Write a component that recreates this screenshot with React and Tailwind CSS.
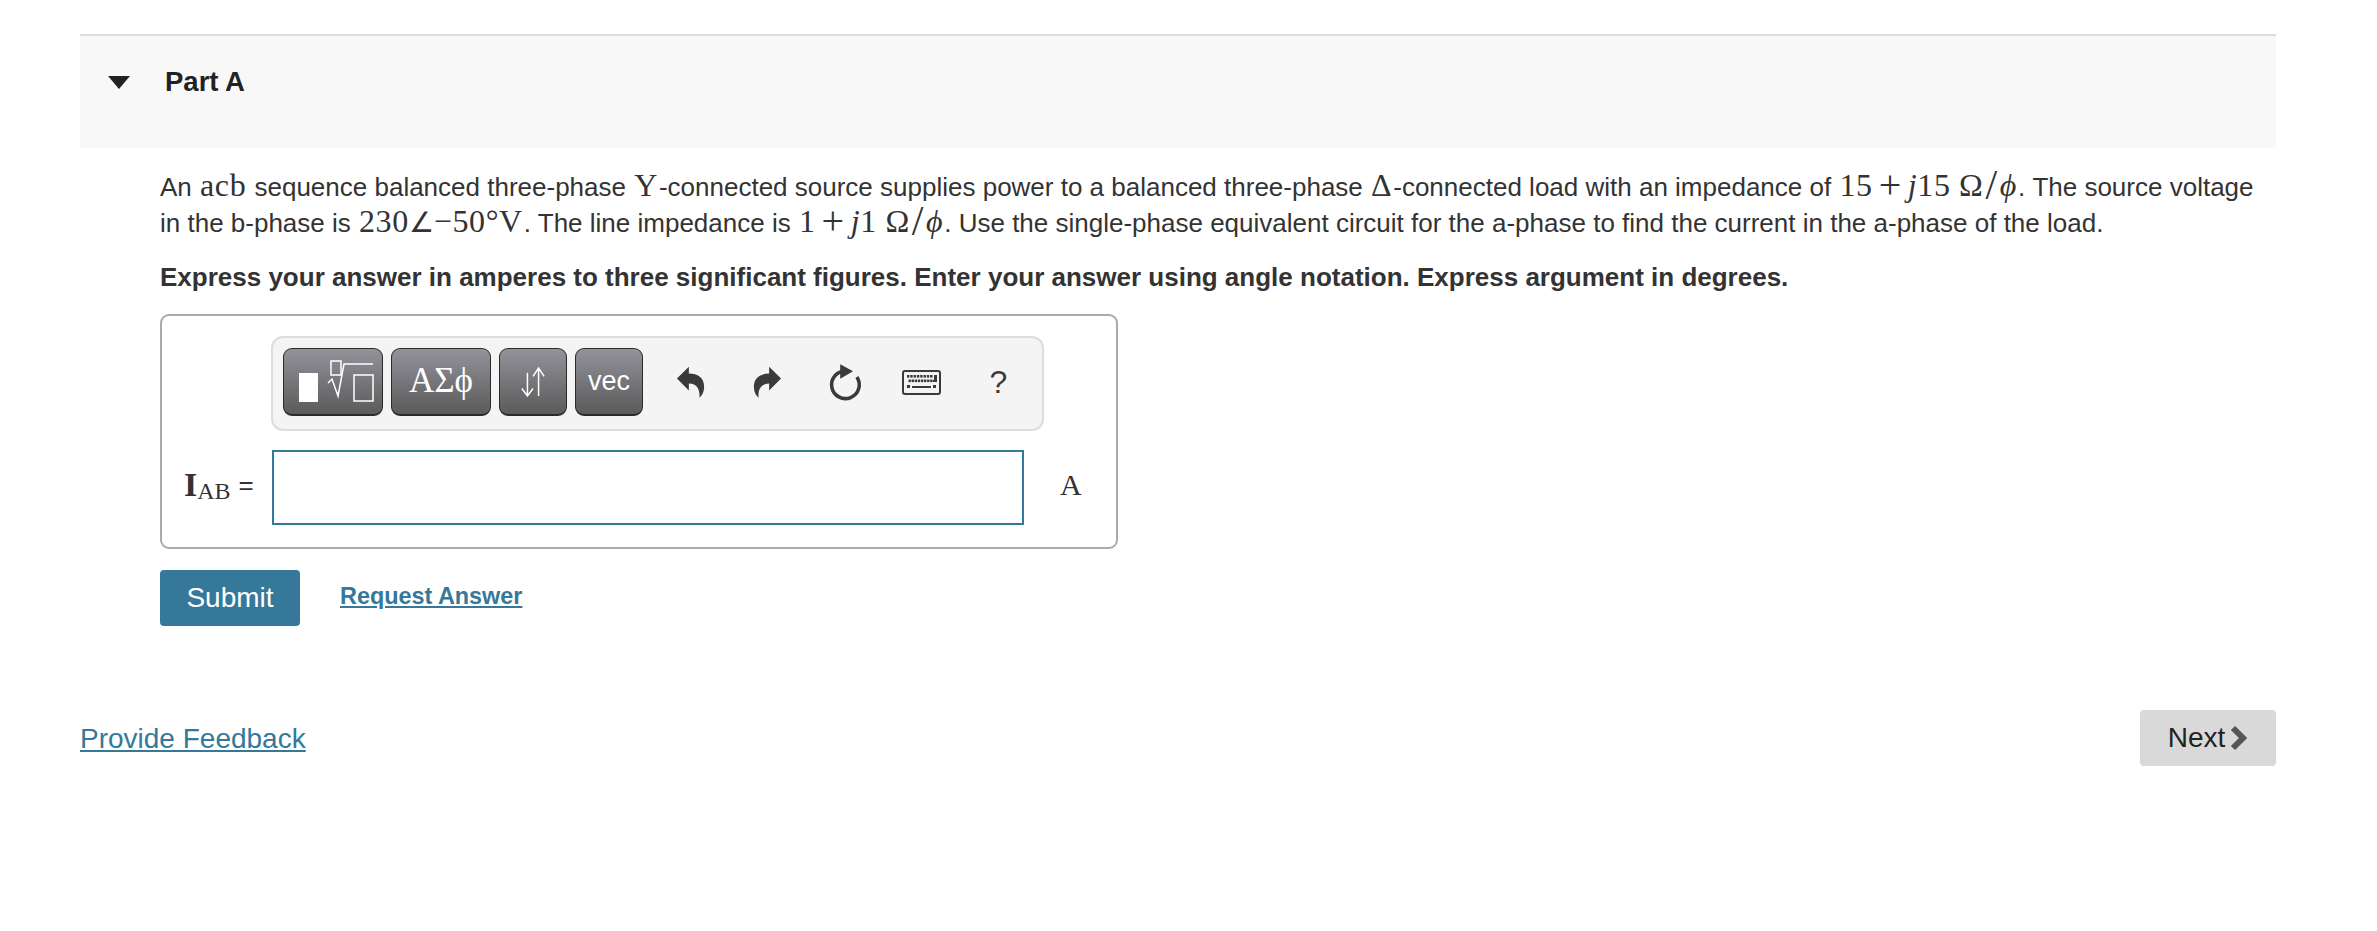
const M = ({ children, className = '' }) => (
  <span className={`font-['Liberation_Serif',serif] text-[32px] tracking-[0.6px] leading-[0] mx-[1px] ${className}`}>{children}</span>
);

const Op = ({ children }) => <span className="text-[40px] leading-[0] mx-[6px] align-[-2px]">{children}</span>;
const Sl = () => <span className="text-[42px] font-light leading-[0] mx-[2px] align-[-3px]">/</span>;

function ToolButton({ className = '', children }) {
  return (
    <div className={`h-[68px] flex items-center justify-center rounded-[9px] border border-[#2b2b2b] border-b-2 bg-gradient-to-b from-[#93939b] to-[#5b5b5b] text-white ${className}`}>
      {children}
    </div>
  );
}

function UndoIcon({ flip }) {
  return (
    <svg width="29" height="33" viewBox="78 122 86 100" className={flip ? '-scale-x-100' : ''}>
      <path
        d="M80 160 L116 124 L116 145 C145 145 165 160 162 190 C161 203 155 212 148 218 C150 200 145 175 116 175 L116 196 Z"
        fill="#3a3a3a"
      />
    </svg>
  );
}

function ReloadIcon() {
  return (
    <svg width="36" height="39" viewBox="527 112 112 120">
      <path d="M585 136 A43 43 0 1 0 620 155" fill="none" stroke="#3a3a3a" strokeWidth="11" />
      <path d="M568 115 L608 137 L568 160 Z" fill="#3a3a3a" />
    </svg>
  );
}

function KeyboardIcon() {
  const top = [0, 1, 2, 3, 4, 5, 6, 7];
  const mid = [0, 1, 2, 3, 4, 5, 6, 7];
  return (
    <svg width="39" height="25" viewBox="0 0 39 25">
      <rect x="1" y="1" width="37" height="23" rx="2" fill="#f4f4f4" stroke="#3a3a3a" strokeWidth="2" />
      {top.map((i) => (
        <rect key={i} x={5 + i * 3.3} y="5" width="2.4" height="2.6" fill="#3a3a3a" />
      ))}
      {mid.map((i) => (
        <rect key={i} x={6.5 + i * 3.1} y="9.5" width="2.4" height="2.6" fill="#3a3a3a" />
      ))}
      <path d="M32 5 H35 V12 H31 V10 H32 Z" fill="#3a3a3a" />
      <rect x="5" y="15" width="3" height="3" fill="#3a3a3a" />
      <rect x="10" y="16" width="19" height="2" fill="#3a3a3a" />
      <rect x="31" y="15" width="3" height="3" fill="#3a3a3a" />
    </svg>
  );
}

function Slot({ children }) {
  return <div className="w-[77px] flex items-center justify-center">{children}</div>;
}

export default function App() {
  return (
    <div className="min-h-[931px] bg-white font-['Liberation_Sans',Arial,sans-serif] text-[#333333] pt-[34px] pl-[80px] pr-[101px]">
      {/* Part header */}
      <div className="h-[114px] border-t-2 border-[#dddddd] bg-[#f8f8f8] flex items-start pt-[28px]">
        <svg width="22" height="13" viewBox="0 0 22 13" className="ml-[28px] mt-[12px]">
          <path d="M0 0 H22 L11 13 Z" fill="#222222" />
        </svg>
        <h2 className="ml-[35px] text-[27.5px] leading-[36px] font-bold text-[#222222]">Part A</h2>
      </div>

      {/* Question */}
      <div className="pl-[80px] pt-[21px]">
        <p className="text-[26px] leading-[36px] pr-[10px]">
          An <M>acb</M> sequence balanced three-phase <M>Y</M>-connected source supplies power to a balanced three-phase <M>Δ</M>-connected load with an impedance of <M>15<Op>+</Op><i>j</i>15 Ω<Sl /><i>ϕ</i></M>. The source voltage in the b-phase is <M>230<span className="font-['DejaVu_Sans',sans-serif] font-extralight text-[28px] tracking-normal">∠</span>−50°V</M>. The line impedance is <M>1<Op>+</Op><i>j</i>1 Ω<Sl /><i>ϕ</i></M>. Use the single-phase equivalent circuit for the a-phase to find the current in the a-phase of the load.
        </p>
        <p className="mt-[18px] text-[26px] leading-[36px] font-bold">
          Express your answer in amperes to three significant figures. Enter your answer using angle notation. Express argument in degrees.
        </p>

        {/* Answer box */}
        <div className="mt-[19px] w-[958px] h-[235px] rounded-[9px] border-2 border-[#aaaaaa] pl-[109px] pt-[20px] relative">
          <div className="w-[773px] h-[95px] rounded-[12px] border-2 border-[#dddddd] bg-[#f4f4f4] flex items-center pl-[10px] pb-[3px]">
            <div className="flex gap-2">
              <ToolButton className="w-[100px]">
                <svg width="98" height="65" viewBox="0 1 98 65">
                  <rect x="15" y="25" width="19" height="29" fill="white" />
                  <rect x="47" y="13" width="10" height="14" fill="none" stroke="white" strokeWidth="1.5" />
                  <path d="M44 35 L48 31 L54 48 L60 16 H89" fill="none" stroke="white" strokeWidth="1.5" />
                  <rect x="70" y="27" width="19" height="26" fill="none" stroke="white" strokeWidth="1.5" />
                </svg>
              </ToolButton>
              <ToolButton className="w-[100px] font-['Liberation_Serif',serif] text-[35px]">ΑΣϕ</ToolButton>
              <ToolButton className="w-[68px]">
                <svg width="26" height="30" viewBox="0 0 28 32">
                  <path d="M8 6 V30 M2 23 L8 31 L14 23" fill="none" stroke="white" strokeWidth="1.6" />
                  <path d="M20 31 V2 M14 10 L20 1 L26 10" fill="none" stroke="white" strokeWidth="1.6" />
                </svg>
              </ToolButton>
              <ToolButton className="w-[68px] text-[27px]">vec</ToolButton>
            </div>
            <div className="ml-[9px] flex items-center">
              <Slot><UndoIcon /></Slot>
              <Slot><UndoIcon flip /></Slot>
              <Slot><ReloadIcon /></Slot>
              <Slot><KeyboardIcon /></Slot>
              <Slot><span className="text-[32px] text-[#3a3a3a]">?</span></Slot>
            </div>
          </div>

          <div className="absolute left-[22px] top-[130px] h-[78px] flex items-center">
            <span className="font-['Liberation_Serif',serif] font-bold text-[34px] leading-none">I</span>
            <span className="font-['Liberation_Serif',serif] text-[24px] leading-none mt-[12px]">AB</span>
            <span className="ml-[8px] text-[26px] leading-none">=</span>
          </div>
          <div className="ml-[1px] mt-[19px] w-[752px] h-[75px] border-2 border-[#357899] bg-white"></div>
          <span className="absolute left-[898px] top-[149px] font-['Liberation_Serif',serif] text-[30px] leading-[40px]">A</span>
        </div>

        {/* Actions */}
        <div className="mt-[21px] flex items-start">
          <button className="w-[140px] h-[56px] rounded-[4px] bg-[#357899] text-white text-[28px]">Submit</button>
          <a className="ml-[40px] mt-[12px] text-[#357899] text-[23.4px] leading-[28px] font-bold underline">Request Answer</a>
        </div>
      </div>

      {/* Footer */}
      <div className="mt-[84px] flex items-center justify-between">
        <a className="mt-[1px] text-[#357899] text-[28px] underline">Provide Feedback</a>
        <button className="w-[136px] h-[56px] rounded-[4px] bg-[#d9d9d9] text-[#222222] text-[28px] flex items-center justify-center gap-[5px]">
          Next
          <svg width="18" height="26" viewBox="0 0 18 26">
            <path d="M3 3 L13 13 L3 23" fill="none" stroke="#555555" strokeWidth="6" />
          </svg>
        </button>
      </div>
    </div>
  );
}
